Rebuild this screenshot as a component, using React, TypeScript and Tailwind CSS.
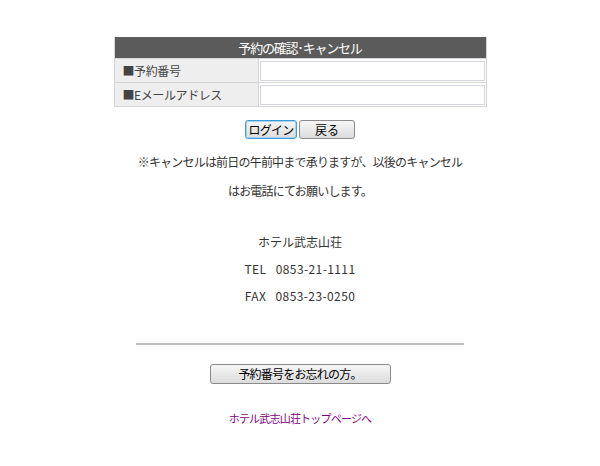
const font = { fontFamily: '"Noto Sans CJK JP", "Noto Sans", sans-serif' };

function Field({ label }: { label: string }) {
  return (
    <div className="grid grid-cols-[144px_1fr] border-t border-[#d6d6d6] h-[24px]">
      <div className="bg-[#eeeeee] border-r border-[#d6d6d6] flex items-center pl-[8px] text-[12px] tracking-[-0.4px] text-[#444]">
        {label}
      </div>
      <div className="flex items-center pl-[1px] pr-[1px]">
        <input className="w-full h-[20px] border border-[#d4d8de] bg-white outline-none" />
      </div>
    </div>
  );
}

function GrayButton({ children, focused, className }: { children: React.ReactNode; focused?: boolean; className: string }) {
  return (
    <button
      className={
        "h-[19px] rounded-[3px] border bg-gradient-to-b from-[#f6f6f6] to-[#dcdcdc] text-[12px] text-black leading-none flex items-center justify-center " +
        (focused ? "border-[#3d9bd8] shadow-[inset_0_0_0_1px_#a8d4f0] " : "border-[#8a8a8a] ") +
        className
      }
    >
      {children}
    </button>
  );
}

export default function App() {
  return (
    <div className="w-[600px] h-[466px] bg-white text-[#333]" style={font}>
      <div className="w-[373px] mx-auto pt-[37px]">
        <div className="border-x border-b border-[#d6d6d6]">
          <div className="h-[22px] bg-[#5b5b5b] text-white text-[13px] tracking-[-1.2px] flex items-center justify-center">
            予約の確認･キャンセル
          </div>
          <div className="-mt-px">
            <Field label="■予約番号" />
            <Field label="■Eメールアドレス" />
          </div>
        </div>
      </div>

      <div className="flex justify-center gap-[2px] mt-[13px]">
        <GrayButton focused className="w-[52px] tracking-[-0.8px]">ログイン</GrayButton>
        <GrayButton className="w-[56px]">戻る</GrayButton>
      </div>

      <div className="mt-[8px] text-center text-[12px] leading-[29px] tracking-[-0.8px] text-[#333]">
        <p>※キャンセルは前日の午前中まで承りますが、以後のキャンセル</p>
        <p>はお電話にてお願いします。</p>
      </div>

      <div className="mt-[23px] text-center text-[12px] leading-[27px] text-[#333]">
        <p>ホテル武志山荘</p>
        <p className="tracking-[0.4px]">TEL&nbsp;&nbsp;&nbsp;0853-21-1111</p>
        <p className="tracking-[0.4px]">FAX&nbsp;&nbsp;&nbsp;0853-23-0250</p>
      </div>

      <div className="w-[328px] mx-auto mt-[34px] border-t-2 border-[#bdbdbd]" />

      <div className="flex justify-center mt-[19px]">
        <GrayButton className="w-[181px] h-[20px] text-[12px] tracking-[-0.8px]">予約番号をお忘れの方。</GrayButton>
      </div>

      <div className="mt-[26px] text-center text-[11px] leading-[16px] tracking-[-0.8px]">
        <a className="text-[#800080]">ホテル武志山荘トップページへ</a>
      </div>
    </div>
  );
}
